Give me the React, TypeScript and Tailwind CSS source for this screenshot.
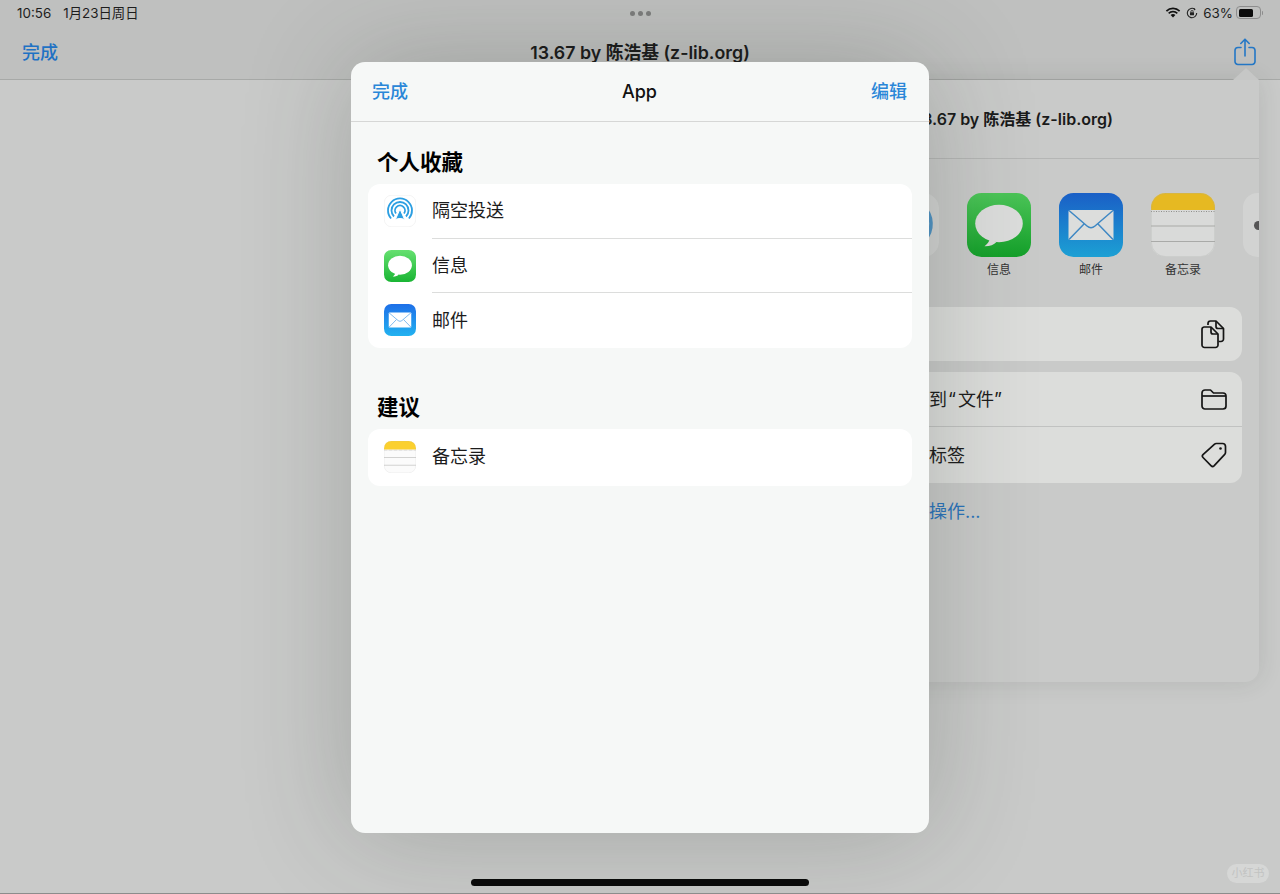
import React from "react";

const FONT = "font-['Inter','Noto_Sans_CJK_SC',sans-serif]";

function Messages({ size, id, top, bottom, bubble }: { size: number; id: string; top: string; bottom: string; bubble: string }) {
  return (
    <svg width={size} height={size} viewBox="0 0 64 64" className="shrink-0">
      <defs>
        <linearGradient id={id} x1="0" y1="0" x2="0" y2="1">
          <stop offset="0" stopColor={top} />
          <stop offset="1" stopColor={bottom} />
        </linearGradient>
      </defs>
      <rect width="64" height="64" rx="14.500" fill={`url(#${id})`} />
      <ellipse cx="32" cy="30.500" rx="23.800" ry="18.800" fill={bubble} />
      <path d="M23 46c-.8 2.500-2.600 5-5.500 7.200 4.800.2 9.500-1.400 12-4.300z" fill={bubble} />
    </svg>
  );
}

function Mail({ size, id, top, bottom, paper, line }: { size: number; id: string; top: string; bottom: string; paper: string; line: string }) {
  return (
    <svg width={size} height={size} viewBox="0 0 64 64" className="shrink-0">
      <defs>
        <linearGradient id={id} x1="0" y1="0" x2="0" y2="1">
          <stop offset="0" stopColor={top} />
          <stop offset="1" stopColor={bottom} />
        </linearGradient>
      </defs>
      <rect width="64" height="64" rx="14.500" fill={`url(#${id})`} />
      <rect x="9.500" y="17" width="45" height="30" rx="1.500" fill={paper} />
      <path d="M10 17.500l18 15.500c2.400 2 5.600 2 8 0l18-15.500M10 46.500L25 31M54 46.500L39 31" fill="none" stroke={line} strokeWidth="1.500" />
    </svg>
  );
}

function Notes({ size, id, yellow, paper, line }: { size: number; id: string; yellow: string; paper: string; line: string }) {
  return (
    <svg width={size} height={size} viewBox="0 0 64 64" className="shrink-0">
      <clipPath id={id}>
        <rect width="64" height="64" rx="14.500" />
      </clipPath>
      <g clipPath={`url(#${id})`}>
        <rect width="64" height="64" fill={paper} />
        <rect width="64" height="17" fill={yellow} />
        <path d="M0 18.500h64" stroke="#8f8f8b" strokeWidth="1" strokeDasharray="1 1.500" />
        <path d="M0 33h64M0 48.500h64" stroke={line} strokeWidth="1.200" />
      </g>
      <rect x="0.400" y="0.400" width="63.200" height="63.200" rx="14.200" fill="none" stroke={line} strokeOpacity="0.350" strokeWidth="0.800" />
    </svg>
  );
}

function AirDrop({ size, tile, color, edge }: { size: number; tile: string; color: string; edge: string }) {
  return (
    <svg width={size} height={size} viewBox="0 0 32 32" className="shrink-0">
      <rect x="0.250" y="0.250" width="31.500" height="31.500" rx="7.300" fill={tile} stroke={edge} strokeWidth="0.500" />
      <g fill="none" stroke={color} strokeWidth="1.800">
        <path d="M7.100 23.500A12 12 0 1 1 24.900 23.500" />
        <path d="M10 21.500A8.500 8.500 0 1 1 22 21.500" />
        <path d="M12 18.500A5 5 0 1 1 20 18.500" />
      </g>
      <path d="M16 14l4.600 10.500c-2.900-1.300-6.300-1.300-9.200 0z" fill={color} stroke={tile} strokeWidth="1" />
    </svg>
  );
}

function Row({ icon, label, divider }: { icon: React.ReactNode; label: string; divider?: boolean }) {
  return (
    <div className="flex h-[54.500px] items-stretch pl-4">
      <div className="flex items-center">{icon}</div>
      <div className={`ml-[16px] flex flex-1 items-center text-[18px] text-[#1c1c1c] ${divider ? "border-b border-[#dcdddc]" : ""}`}>
        {label}
      </div>
    </div>
  );
}

function ShareApp({ icon, label }: { icon: React.ReactNode; label: string }) {
  return (
    <div className="flex w-16 flex-col items-center">
      {icon}
      <span className="mt-[5px] text-[12px] leading-[16px] text-[#333]">{label}</span>
    </div>
  );
}

export default function App() {
  return (
    <div className={`${FONT} relative h-[894px] w-[1280px] overflow-hidden bg-[#c9cac9]`}>
      {/* page header */}
      <div className="h-20 border-b border-[#a7a9a7] bg-[#bfc0bf]">
        <div className="flex h-[26px] items-center px-[17px] text-[13.400px] text-[#1d1d1d]">
          <div className="flex flex-1 items-center">
            <span>10:56</span>
            <span className="ml-[12px]">1月23日周日</span>
          </div>
          <div className="flex gap-[3px]">
            <span className="h-[5px] w-[5px] rounded-full bg-[#7d7d7d]" />
            <span className="h-[5px] w-[5px] rounded-full bg-[#7d7d7d]" />
            <span className="h-[5px] w-[5px] rounded-full bg-[#7d7d7d]" />
          </div>
          <div className="flex flex-1 items-center justify-end">
            <svg width="16" height="12" viewBox="0 0 16 12">
              <path d="M8 2.300c2.300 0 4.400.9 6 2.400l1.200-1.300A10.500 10.500 0 0 0 8 .5 10.500 10.500 0 0 0 .8 3.400L2 4.700a8.700 8.700 0 0 1 6-2.400z" fill="#111" />
              <path d="M8 5.500c1.400 0 2.700.5 3.700 1.500l1.200-1.300A7 7 0 0 0 8 3.700a7 7 0 0 0-4.900 2L4.300 7c1-1 2.300-1.500 3.700-1.500z" fill="#111" />
              <path d="M8 7c-.9 0-1.700.3-2.400.9L8 10.500l2.400-2.600C9.700 7.300 8.900 7 8 7z" fill="#111" />
            </svg>
            <svg width="12" height="12" viewBox="0 0 12 12" className="ml-[5px]">
              <path d="M10.700 6A4.700 4.700 0 1 1 9 2.400" fill="none" stroke="#222" strokeWidth="1.100" />
              <path d="M8.300 1l1.300 1.700-2 .7z" fill="#222" />
              <rect x="4" y="5.300" width="4" height="3" rx="0.500" fill="#222" />
              <path d="M4.800 5.500V4.700a1.200 1.200 0 0 1 2.400 0v.8" fill="none" stroke="#222" strokeWidth="0.800" />
            </svg>
            <span className="ml-[5px]">63%</span>
            <div className="ml-[3px] flex items-center">
              <div className="h-[13px] w-[25px] rounded-[4px] border border-[#8d8d8d] p-[1.500px]">
                <div className="h-full w-[14px] rounded-[1.500px] bg-[#0c0c0c]" />
              </div>
              <div className="ml-[0.500px] h-[4px] w-[1.500px] rounded-r bg-[#8d8d8d]" />
            </div>
          </div>
        </div>
        <div className="relative flex h-[53px] items-center justify-between pl-[22px] pr-[24px]">
          <span className="text-[18px] font-medium text-[#1f72c4]">完成</span>
          <span className="absolute left-0 right-0 top-[14px] text-center text-[17.800px] font-semibold leading-[26px] text-[#1a1a1a]">
            13.67 by 陈浩基 (z-lib.org)
          </span>
          <svg width="22" height="28" viewBox="0 0 22 28" fill="none" stroke="#2477c6" strokeWidth="1.600" strokeLinecap="round" strokeLinejoin="round" className="mt-[-1px]">
            <path d="M7 9.500H4a3 3 0 0 0-3 3V23.500a3 3 0 0 0 3 3h14a3 3 0 0 0 3-3V12.500a3 3 0 0 0-3-3h-3" />
            <path d="M11 18V1.500M6.800 5.500L11 1.200l4.200 4.300" />
          </svg>
        </div>
      </div>

      {/* share popover behind the sheet */}
      <div className="absolute left-[700px] top-[80px] h-[602px] w-[559px] rounded-b-[14px] bg-[#c9cac9] shadow-[0_0_24px_rgba(40,50,40,0.12)]">
        <div className="absolute right-0 top-[-12px] h-0 w-0 border-x-[13px] border-b-[12px] border-x-transparent border-b-[#c6c7c6]" />
        <div className="flex h-[79px] items-center justify-end border-b border-[#b5b6b5] pb-[1px] pr-[146px] text-[16px] font-semibold text-[#1a1a1a]">
          13.67 by 陈浩基 (z-lib.org)
        </div>
        <div className="flex gap-[28px] pl-[175px] pt-[34px]">
          <ShareApp icon={<AirDrop size={64} tile="#d2d3d2" color="#4f93c4" edge="#d2d3d2" />} label={"\u00a0"} />
          <ShareApp icon={<Messages size={64} id="m1" top="#4cc558" bottom="#14a02a" bubble="#dcdddc" />} label="信息" />
          <ShareApp icon={<Mail size={64} id="ma1" top="#1a5fc6" bottom="#1ca0d4" paper="#dcdddc" line="#3f88c4" />} label="邮件" />
          <ShareApp icon={<Notes size={64} id="n1" yellow="#e6b922" paper="#d9dad9" line="#a9aaa8" />} label="备忘录" />
          <div className="flex h-16 w-4 items-center overflow-hidden rounded-l-[14.500px] bg-[#d2d3d2] pl-[11px]">
            <span className="h-[9px] w-[9px] shrink-0 rounded-full bg-[#555]" />
          </div>
        </div>
        <div className="ml-[150px] mr-[17px] mt-[29px] flex h-[54px] items-center justify-end rounded-[12px] bg-[#dcdddb] pr-[16px]">
          <svg width="26" height="30" viewBox="0 0 26 30" fill="none" stroke="#151515" strokeWidth="1.700" strokeLinejoin="round">
            <path d="M8 6V4.500A2.500 2.500 0 0 1 10.500 2H16l7.500 7.500V20a2.500 2.500 0 0 1-2.500 2.500h-2.500" />
            <path d="M16 2v5.500a2 2 0 0 0 2 2h5.500" />
            <path d="M4 8h7l7 7v11a2.500 2.500 0 0 1-2.500 2.500h-11A2.500 2.500 0 0 1 2 26V10.500A2.500 2.500 0 0 1 4 8z" fill="#dcdddb" />
            <path d="M11 8v5a2 2 0 0 0 2 2h5" />
          </svg>
        </div>
        <div className="ml-[150px] mr-[17px] mt-[11px] rounded-[12px] bg-[#dcdddb] text-[18px] text-[#1c1c1c]">
          <div className="flex h-[55px] items-center justify-between border-b border-[#c1c2c1] pl-[79px] pr-[15px]">
            <span>到<span className="ml-[1px] mr-[2px]">“</span>文件”</span>
            <svg width="26" height="22" viewBox="0 0 26 22" fill="none" stroke="#151515" strokeWidth="1.700" strokeLinejoin="round">
              <path d="M1 5a3 3 0 0 1 3-3h5.500l3 3H22a3 3 0 0 1 3 3v10a3 3 0 0 1-3 3H4a3 3 0 0 1-3-3z" />
              <path d="M1 8h24" />
            </svg>
          </div>
          <div className="flex h-[56px] items-center justify-between pl-[79px] pr-[15px]">
            <span>标签</span>
            <svg width="26" height="26" viewBox="0 0 26 26" fill="none" stroke="#151515" strokeWidth="1.700" strokeLinejoin="round">
              <path d="M15.500 1.500h6a3 3 0 0 1 3 3v6a3 3 0 0 1-1 2.200L13 23.800a2 2 0 0 1-2.800 0L2 15.500a2 2 0 0 1 0-2.800L13.300 2.300a3 3 0 0 1 2.200-.8z" />
              <circle cx="19.500" cy="6.500" r="1.300" fill="#151515" stroke="none" />
            </svg>
          </div>
        </div>
        <div className="ml-[229px] mt-[15px] text-[18px] text-[#2a74bb]">操作...</div>
      </div>

      {/* sheet */}
      <div className="absolute left-[351px] top-[62px] h-[771px] w-[578px] overflow-hidden rounded-[14px] bg-[#f6f8f7] shadow-[0_0_110px_rgba(40,50,40,0.24)]">
        <div className="flex h-[60px] items-center justify-between border-b border-[#d6d7d6] px-[21px] pb-[1px]">
          <span className="text-[18px] font-medium text-[#2a87d8]">完成</span>
          <span className="text-[18px] font-medium text-[#111]">App</span>
          <span className="pr-[1px] text-[18px] font-medium text-[#2a87d8]">编辑</span>
        </div>
        <div className="px-[17px]">
          <h2 className="ml-[9px] mt-[27px] text-[21.500px] font-semibold leading-[26px] text-black">个人收藏</h2>
          <div className="mt-[9px] rounded-[12px] bg-white">
            <Row icon={<AirDrop size={32} tile="#fff" color="#2c9fe2" edge="#e8e8e8" />} label="隔空投送" divider />
            <Row icon={<Messages size={32} id="m2" top="#66e070" bottom="#1ab534" bubble="#fff" />} label="信息" divider />
            <Row icon={<Mail size={32} id="ma2" top="#1e6fe8" bottom="#22b2f0" paper="#fff" line="#5aa6e8" />} label="邮件" />
          </div>
          <h2 className="ml-[9px] mt-[46px] text-[21.500px] font-semibold leading-[26px] text-black">建议</h2>
          <div className="mt-[9px] rounded-[12px] bg-white">
            <div className="flex h-[57px] items-center pl-4">
              <Notes size={32} id="n2" yellow="#fbd02e" paper="#fbfbfb" line="#b7b7b5" />
              <span className="mb-[2px] ml-[16px] text-[18px] text-[#1c1c1c]">备忘录</span>
            </div>
          </div>
        </div>
      </div>

      {/* home indicator and watermark */}
      <div className="absolute bottom-[8px] left-[471px] h-[7px] w-[338px] rounded-full bg-[#0a0a0a]" />
      <div className="absolute left-[1227px] top-[864px] flex h-[19px] w-[42px] items-center justify-center rounded-full bg-[#d6d7d6] text-[11px] text-[#c2c3c2]">小红书</div>
      <div className="absolute bottom-0 left-0 h-[1px] w-full bg-[#8c8c8c]" />
    </div>
  );
}
